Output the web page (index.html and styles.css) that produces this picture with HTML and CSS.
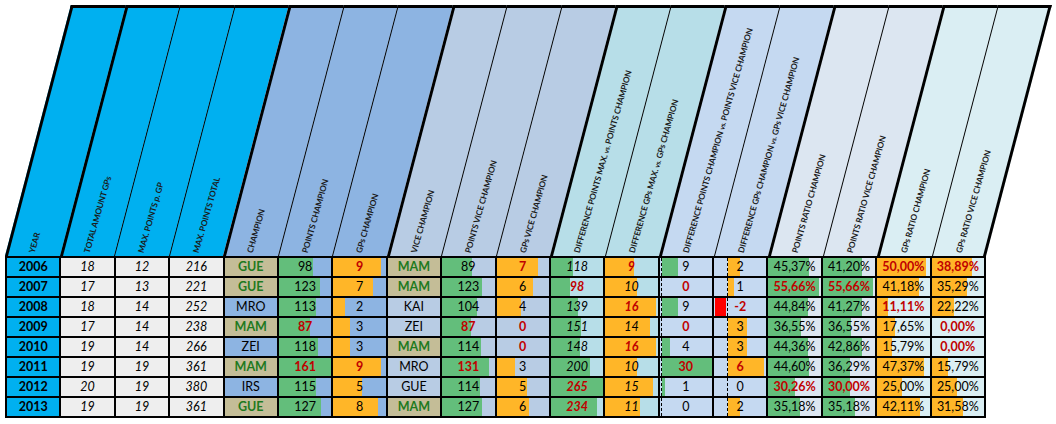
FILE: index.html
```html
<!DOCTYPE html>
<html>
<head>
<meta charset="utf-8">
<link rel="stylesheet" href="styles.css">
</head>
<body>
<div class="sheet">
  <div class="head">
    <div class="hc h1 tk"><span class="lbl">YEAR</span></div>
    <div class="hc h1 tk"><span class="lbl">TOTAL AMOUNT GPs</span></div>
    <div class="hc h1"><span class="lbl">MAX. POINTS p. GP</span></div>
    <div class="hc h1"><span class="lbl">MAX. POINTS TOTAL</span></div>
    <div class="hc h2 tk"><span class="lbl">CHAMPION</span></div>
    <div class="hc h2"><span class="lbl">POINTS CHAMPION</span></div>
    <div class="hc h2"><span class="lbl">GPs CHAMPION</span></div>
    <div class="hc h3 tk"><span class="lbl">VICE CHAMPION</span></div>
    <div class="hc h3"><span class="lbl">POINTS VICE CHAMPION</span></div>
    <div class="hc h3"><span class="lbl">GPs VICE CHAMPION</span></div>
    <div class="hc h4 tk"><span class="lbl">DIFFERENCE POINTS MAX. <small>vs.</small> POINTS CHAMPION</span></div>
    <div class="hc h4"><span class="lbl">DIFFERENCE GPs MAX. <small>vs.</small> GPs CHAMPION</span></div>
    <div class="hc h5 tk"><span class="lbl">DIFFERENCE POINTS CHAMPION <small>vs.</small> POINTS VICE CHAMPION</span></div>
    <div class="hc h5"><span class="lbl">DIFFERENCE GPs CHAMPION <small>vs.</small> GPs VICE CHAMPION</span></div>
    <div class="hc h6 tk"><span class="lbl">POINTS RATIO CHAMPION</span></div>
    <div class="hc h6"><span class="lbl">POINTS RATIO VICE CHAMPION</span></div>
    <div class="hc h7 tk"><span class="lbl">GPs RATIO CHAMPION</span></div>
    <div class="hc h7 last"><span class="lbl">GPs RATIO VICE CHAMPION</span></div>
  </div>

  <div class="grid">
    <!-- 2006 -->
    <div class="c yr">2006</div>
    <div class="c gy i">18</div><div class="c gy i">12</div><div class="c gy i">216</div>
    <div class="c tan gn">GUE</div>
    <div class="c b1 bar g" style="--w:34px">98</div>
    <div class="c b1 bar o r" style="--w:48px">9</div>
    <div class="c tan gn">MAM</div>
    <div class="c b2 bar g" style="--w:30px">89</div>
    <div class="c b2 bar o r" style="--w:41px">7</div>
    <div class="c tl i bar g" style="--w:22px">118</div>
    <div class="c tl i bar o r" style="--w:29px">9</div>
    <div class="c b3 ax1 g" style="--a:2px;--w:18px">9</div>
    <div class="c b3 ax2 o" style="--a:14px;--w:26px">2</div>
    <div class="c b4 bar g" style="--w:41px">45,37%</div>
    <div class="c b4 bar g" style="--w:39px">41,20%</div>
    <div class="c b5 bar o r" style="--w:49px">50,00%</div>
    <div class="c b5 bar o r" style="--w:40px">38,89%</div>

    <!-- 2007 -->
    <div class="c yr">2007</div>
    <div class="c gy i">17</div><div class="c gy i">13</div><div class="c gy i">221</div>
    <div class="c tan gn">GUE</div>
    <div class="c b1 bar g" style="--w:41px">123</div>
    <div class="c b1 bar o" style="--w:40px">7</div>
    <div class="c tan gn">MAM</div>
    <div class="c b2 bar g" style="--w:40px">123</div>
    <div class="c b2 bar o" style="--w:36px">6</div>
    <div class="c tl i bar g r" style="--w:19px">98</div>
    <div class="c tl i bar o" style="--w:32px">10</div>
    <div class="c b3 ax1 g r" style="--a:2px;--w:2px">0</div>
    <div class="c b3 ax2 o" style="--a:14px;--w:20px">1</div>
    <div class="c b4 bar g r" style="--w:51px">55,66%</div>
    <div class="c b4 bar g r" style="--w:50px">55,66%</div>
    <div class="c b5 bar o" style="--w:42px">41,18%</div>
    <div class="c b5 bar o" style="--w:35px">35,29%</div>

    <!-- 2008 -->
    <div class="c yr">2008</div>
    <div class="c gy i">18</div><div class="c gy i">14</div><div class="c gy i">252</div>
    <div class="c bl1">MRO</div>
    <div class="c b1 bar g" style="--w:37px">113</div>
    <div class="c b1 bar o" style="--w:12px">2</div>
    <div class="c bl2">KAI</div>
    <div class="c b2 bar g" style="--w:35px">104</div>
    <div class="c b2 bar o" style="--w:24px">4</div>
    <div class="c tl i bar g" style="--w:27px">139</div>
    <div class="c tl i bar o r" style="--w:51px">16</div>
    <div class="c b3 ax1 g" style="--a:2px;--w:18px">9</div>
    <div class="c b3 ax2 neg r" style="--a:1px;--w:12px">-2</div>
    <div class="c b4 bar g" style="--w:40px">44,84%</div>
    <div class="c b4 bar g" style="--w:39px">41,27%</div>
    <div class="c b5 bar o r" style="--w:11px">11,11%</div>
    <div class="c b5 bar o" style="--w:22px">22,22%</div>

    <!-- 2009 -->
    <div class="c yr">2009</div>
    <div class="c gy i">17</div><div class="c gy i">14</div><div class="c gy i">238</div>
    <div class="c tan gn">MAM</div>
    <div class="c b1 bar g r" style="--w:31px">87</div>
    <div class="c b1 bar o" style="--w:17px">3</div>
    <div class="c bl2">ZEI</div>
    <div class="c b2 bar g r" style="--w:29px">87</div>
    <div class="c b2 r">0</div>
    <div class="c tl i bar g" style="--w:30px">151</div>
    <div class="c tl i bar o" style="--w:45px">14</div>
    <div class="c b3 ax1 g r" style="--a:2px;--w:2px">0</div>
    <div class="c b3 ax2 o" style="--a:14px;--w:33px">3</div>
    <div class="c b4 bar g" style="--w:33px">36,55%</div>
    <div class="c b4 bar g" style="--w:28px">36,55%</div>
    <div class="c b5 bar o" style="--w:18px">17,65%</div>
    <div class="c b5 r">0,00%</div>

    <!-- 2010 -->
    <div class="c yr">2010</div>
    <div class="c gy i">19</div><div class="c gy i">14</div><div class="c gy i">266</div>
    <div class="c bl1">ZEI</div>
    <div class="c b1 bar g" style="--w:39px">118</div>
    <div class="c b1 bar o" style="--w:17px">3</div>
    <div class="c tan gn">MAM</div>
    <div class="c b2 bar g" style="--w:39px">114</div>
    <div class="c b2 r">0</div>
    <div class="c tl i bar g" style="--w:29px">148</div>
    <div class="c tl i bar o r" style="--w:51px">16</div>
    <div class="c b3 ax1 g" style="--a:2px;--w:10px">4</div>
    <div class="c b3 ax2 o" style="--a:14px;--w:33px">3</div>
    <div class="c b4 bar g" style="--w:40px">44,36%</div>
    <div class="c b4 bar g" style="--w:39px">42,86%</div>
    <div class="c b5 bar o" style="--w:15px">15,79%</div>
    <div class="c b5 r">0,00%</div>

    <!-- 2011 -->
    <div class="c yr">2011</div>
    <div class="c gy i">19</div><div class="c gy i">19</div><div class="c gy i">361</div>
    <div class="c tan gn">MAM</div>
    <div class="c b1 bar g r" style="--w:53px">161</div>
    <div class="c b1 bar o r" style="--w:48px">9</div>
    <div class="c bl2">MRO</div>
    <div class="c b2 bar g r" style="--w:47px">131</div>
    <div class="c b2 bar o" style="--w:18px">3</div>
    <div class="c tl i bar g" style="--w:39px">200</div>
    <div class="c tl i bar o" style="--w:32px">10</div>
    <div class="c b3 ax1 g r" style="--a:2px;--w:53px">30</div>
    <div class="c b3 ax2 o r" style="--a:14px;--w:50px">6</div>
    <div class="c b4 bar g" style="--w:41px">44,60%</div>
    <div class="c b4 bar g" style="--w:27px">36,29%</div>
    <div class="c b5 bar o" style="--w:47px">47,37%</div>
    <div class="c b5 bar o" style="--w:16px">15,79%</div>

    <!-- 2012 -->
    <div class="c yr">2012</div>
    <div class="c gy i">20</div><div class="c gy i">19</div><div class="c gy i">380</div>
    <div class="c bl1">IRS</div>
    <div class="c b1 bar g" style="--w:37px">115</div>
    <div class="c b1 bar o" style="--w:29px">5</div>
    <div class="c bl2">GUE</div>
    <div class="c b2 bar g" style="--w:38px">114</div>
    <div class="c b2 bar o" style="--w:30px">5</div>
    <div class="c tl i bar g r" style="--w:52px">265</div>
    <div class="c tl i bar o" style="--w:48px">15</div>
    <div class="c b3 ax1 g" style="--a:2px;--w:5px">1</div>
    <div class="c b3 ax2 o" style="--a:14px;--w:14px">0</div>
    <div class="c b4 bar g r" style="--w:27px">30,26%</div>
    <div class="c b4 bar g r" style="--w:27px">30,00%</div>
    <div class="c b5 bar o" style="--w:25px">25,00%</div>
    <div class="c b5 bar o" style="--w:25px">25,00%</div>

    <!-- 2013 -->
    <div class="c yr">2013</div>
    <div class="c gy i">19</div><div class="c gy i">19</div><div class="c gy i">361</div>
    <div class="c tan gn">GUE</div>
    <div class="c b1 bar g" style="--w:42px">127</div>
    <div class="c b1 bar o" style="--w:45px">8</div>
    <div class="c tan gn">MAM</div>
    <div class="c b2 bar g" style="--w:40px">127</div>
    <div class="c b2 bar o" style="--w:32px">6</div>
    <div class="c tl i bar g r" style="--w:46px">234</div>
    <div class="c tl i bar o" style="--w:35px">11</div>
    <div class="c b3 ax1 g" style="--a:2px;--w:2px">0</div>
    <div class="c b3 ax2 o" style="--a:14px;--w:26px">2</div>
    <div class="c b4 bar g" style="--w:32px">35,18%</div>
    <div class="c b4 bar g" style="--w:32px">35,18%</div>
    <div class="c b5 bar o" style="--w:43px">42,11%</div>
    <div class="c b5 bar o" style="--w:31px">31,58%</div>
  </div>
</div>
</body>
</html>
```

FILE: styles.css
```css
html, body {
  margin: 0;
  padding: 0;
  background: #ffffff;
  overflow: hidden;
}

.sheet {
  padding: 5px 0 0 5px;
  font-family: Lato, "Open Sans", "Liberation Sans", sans-serif;
  color: #000;
}

/* ---------- slanted header ---------- */
.head {
  display: flex;
  width: 981px;
  height: 251px;
  transform: skewX(-14.7deg);
  transform-origin: 0 100%;
}

.hc {
  flex: none;
  width: 54.5px;
  box-sizing: border-box;
  border-top: 3px solid #000;
  border-left: 1px solid #000;
  display: flex;
  align-items: flex-end;
  padding: 0 0 2px 30px;
}

.hc.tk { border-left-width: 3px; padding-left: 28px; }
.hc.last { border-right: 3px solid #000; }

.h1 { background: #00b0f0; }
.h2 { background: #8db4e2; }
.h3 { background: #b8cce4; }
.h4 { background: #b7dee8; }
.h5 { background: #c5d9f1; }
.h6 { background: #dce6f1; }
.h7 { background: #daeef3; }

.lbl {
  white-space: nowrap;
  font-size: 8.3px;
  line-height: 10px;
  font-weight: 700;
  letter-spacing: -0.15px;
  color: #1a1a1a;
  transform-origin: 0 100%;
  transform: skewX(14.7deg) rotate(-74deg);
}

.lbl small {
  font-size: 6.8px;
}

/* ---------- data grid ---------- */
.grid {
  display: grid;
  grid-template-columns: repeat(18, 1fr);
  width: 981px;
  box-sizing: border-box;
  gap: 2px;
  padding: 2px;
  background: #000;
}

.c {
  height: 18px;
  display: flex;
  align-items: center;
  justify-content: center;
  font-size: 12.5px;
  line-height: 18px;
  white-space: nowrap;
  background-repeat: no-repeat;
}

.yr { background-color: #00b0f0; font-weight: 700; }
.gy { background-color: #eeeeee; }
.tan { background-color: #c4bd97; }
.bl1 { background-color: #8db4e2; }
.bl2 { background-color: #b8cce4; }
.b1 { background-color: #8db4e2; }
.b2 { background-color: #b8cce4; }
.tl { background-color: #b7dee8; }
.b3 { background-color: #c5d9f1; }
.b4 { background-color: #dce6f1; }
.b5 { background-color: #daeef3; }

.i { font-style: italic; }
.r { color: #c00000; font-weight: 700; }
.gn { color: #1f7a1f; font-weight: 700; }

.g { --bc: #63be7b; }
.o { --bc: #ffb628; }
.neg { --bc: #ff0000; }

.bar {
  background-image: linear-gradient(90deg, var(--bc) var(--w), transparent var(--w));
}

/* data bars with a dashed axis */
.ax1, .ax2 {
  background-image:
    linear-gradient(to bottom, #000 0 3px, transparent 3px 5px),
    linear-gradient(90deg, transparent var(--a), var(--bc) var(--a), var(--bc) var(--w), transparent var(--w));
  background-size: 1px 5px, 100% 100%;
  background-repeat: repeat-y, no-repeat;
}

.ax1 { background-position: 1px 0, 0 0; }
.ax2 { background-position: 13px 0, 0 0; }
```
